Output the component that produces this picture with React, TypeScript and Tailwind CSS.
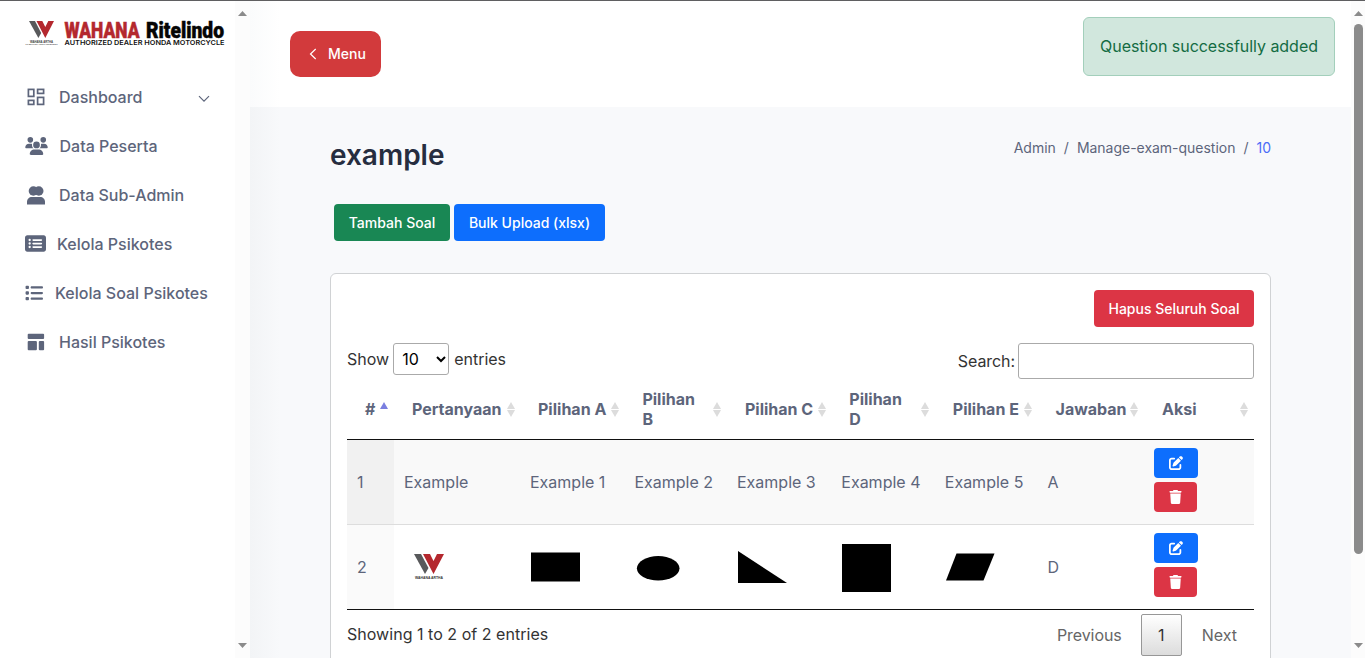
import React from "react";
import { FaUsers, FaRectangleList, FaList, FaPenToSquare, FaTrash } from "react-icons/fa6";

function WahanaMark({ className }: { className: string }) {
  return (
    <svg viewBox="0 0 30 20" className={className} preserveAspectRatio="none">
      <path d="M0 0H7L14.5 14L11 20Z" fill="#58595b" />
      <path d="M9 0H16L19.5 7L23 0H30L19.5 20Z" fill="#b4282e" />
    </svg>
  );
}

function GridIcon() {
  return (
    <svg viewBox="0 0 18 18" className="h-[18px] w-[18px]" fill="none" stroke="currentColor" strokeWidth="1.7">
      <rect x="1.4" y="1.4" width="5.4" height="7" />
      <rect x="10.6" y="1.4" width="6" height="4" />
      <rect x="1.4" y="12.4" width="5.4" height="4" />
      <rect x="10.6" y="9.4" width="6" height="7" />
    </svg>
  );
}

function PeopleIcon() {
  return (
    <svg viewBox="0 0 18 19" className="mt-px h-[19px] w-[18px]" fill="currentColor">
      <circle cx="6.4" cy="5" r="4.7" />
      <circle cx="11.8" cy="5" r="4.7" />
      <path d="M0 18.5V16C0 13 2 11 5 11H13C16 11 18 13 18 16V18.5Z" />
    </svg>
  );
}

function LayoutIcon() {
  return (
    <svg viewBox="0 0 18 18" className="h-[18px] w-[18px]" fill="currentColor">
      <rect x="0.7" y="0.8" width="16.4" height="5.3" rx="1" />
      <rect x="0.7" y="8" width="9.2" height="9.2" rx="1" />
      <rect x="11.8" y="8" width="5.3" height="9.2" rx="1" />
    </svg>
  );
}

const menu = [
  { label: "Dashboard", icon: <GridIcon />, pad: "pl-[27px] gap-[14px]" },
  { label: "Data Peserta", icon: <FaUsers className="h-[18px] w-[23px]" />, pad: "pl-[25px] gap-[11.5px]" },
  { label: "Data Sub-Admin", icon: <PeopleIcon />, pad: "pl-[27px] gap-[14px]" },
  { label: "Kelola Psikotes", icon: <FaRectangleList className="h-[21px] w-[21px]" />, pad: "pl-[25px] gap-[11px]" },
  { label: "Kelola Soal Psikotes", icon: <FaList className="h-[18px] w-[18px]" />, pad: "pl-[25px] gap-[12px]" },
  { label: "Hasil Psikotes", icon: <LayoutIcon />, pad: "pl-[27px] gap-[14px]" },
];

function Triangle({ down, className }: { down?: boolean; className: string }) {
  return (
    <svg viewBox="0 0 8 6" className={className} fill="currentColor" preserveAspectRatio="none">
      <path d={down ? "M0 0H8L4 6Z" : "M0 6H8L4 0Z"} />
    </svg>
  );
}

function Sidebar() {
  return (
    <aside className="flex w-[250px] shrink-0">
      <div className="flex w-[235px] flex-col bg-white">
        <div className="flex h-[71px] items-start pl-[25px] pt-[20px]">
          <svg viewBox="0 0 33 26" className="h-[26px] w-[33px]" fontFamily="Liberation Sans" fontWeight="700" fill="#444">
            <path d="M4 0H10L16.2 12L13.4 17Z" fill="#58595b" />
            <path d="M11.5 0H17.3L20.3 6L23.3 0H29L20.3 17Z" fill="#b4282e" />
            <text x="5" y="21.6" fontSize="2.8" textLength="23" lengthAdjust="spacingAndGlyphs">WAHANA ARTHA</text>
            <text x="0.5" y="24.2" fontSize="2" textLength="32" lengthAdjust="spacingAndGlyphs">PT WAHANA ARTHA RITELINDO</text>
          </svg>
          <div className="ml-[6px] flex w-[162px] flex-col">
            <svg viewBox="0 0 162 18" className="h-[18px] w-[162px] overflow-visible" fontFamily="Roboto" fontWeight="900" fontSize="22" strokeWidth="0.5">
              <text x="0.5" y="16.7" textLength="75" lengthAdjust="spacingAndGlyphs" fill="#b4282e" stroke="#b4282e">WAHANA</text>
              <text x="82" y="16.7" textLength="78" lengthAdjust="spacingAndGlyphs" fill="#050505" stroke="#050505">Ritelindo</text>
            </svg>
            <svg viewBox="0 0 162 8" className="h-[8px] w-[162px] overflow-visible" fontFamily="Inter" fontWeight="600" fontSize="6.8">
              <text x="0.5" y="6" textLength="160" lengthAdjust="spacingAndGlyphs" fill="#111">AUTHORIZED DEALER HONDA MOTORCYCLE</text>
            </svg>
          </div>
        </div>
        <nav className="flex flex-col">
          {menu.map((m, i) => (
            <div key={m.label} className={`flex h-[49px] items-center text-[#5d657b] ${m.pad}`}>
              {m.icon}
              <span className="whitespace-nowrap text-base font-medium">{m.label}</span>
              {i === 0 && (
                <svg viewBox="0 0 12 8" className="ml-auto mr-[25px] mt-[5px] h-[8px] w-[12px]" fill="none" stroke="currentColor" strokeWidth="1.2">
                  <path d="M1 1.2L6 6.2L11 1.2" />
                </svg>
              )}
            </div>
          ))}
        </nav>
      </div>
      <div className="flex w-[15px] flex-col items-center justify-between bg-[#fcfcfc] pb-[10px] pt-[10px] text-[#8b8b8b]">
        <Triangle className="h-[5px] w-[9px]" />
        <Triangle down className="h-[5px] w-[9px]" />
      </div>
    </aside>
  );
}

const headers = ["Pertanyaan", "Pilihan A", "Pilihan B", "Pilihan C", "Pilihan D", "Pilihan E", "Jawaban", "Aksi"];
const columns = "grid grid-cols-[47px_126px_104.4px_102.6px_104.3px_103.5px_102.8px_106.4px_110px]";

function ActionButtons() {
  return (
    <div className="flex flex-col gap-1 pb-[4px] pl-[10px]">
      <button className="flex h-[30px] w-[44px] items-center justify-center rounded-[4px] bg-[#0d6efd] text-white">
        <FaPenToSquare className="h-[14px] w-[14px]" />
      </button>
      <button className="flex h-[30px] w-[43px] items-center justify-center rounded-[4px] bg-[#dc3545] text-white">
        <FaTrash className="h-[14px] w-[13px]" />
      </button>
    </div>
  );
}

const shapes = [
  <svg viewBox="0 0 50 50" className="h-[50px] w-[50px]"><rect x="1" y="10.5" width="49" height="29" /></svg>,
  <svg viewBox="0 0 50 50" className="h-[50px] w-[50px]"><ellipse cx="24.2" cy="26.3" rx="21.3" ry="12.2" /></svg>,
  <svg viewBox="0 0 50 50" className="h-[50px] w-[50px]"><path d="M1 9V41H50Z" /></svg>,
  <svg viewBox="0 0 50 50" className="h-[50px] w-[50px]"><rect x="1" y="2" width="49" height="48" /></svg>,
  <svg viewBox="0 0 50 50" className="h-[50px] w-[50px]"><path d="M11.5 11.5H49.5L38.5 38.5H1Z" /></svg>,
];

function QuestionTable() {
  return (
    <div className="text-[#5d657b]">
      <div className={`${columns} h-[61px] border-b border-[#111] font-bold leading-5`}>
        <div className="flex items-center gap-[5px] pl-[18px]">
          #<Triangle className="mb-[7px] h-[7px] w-[8px] text-[#7a7fe0]" />
        </div>
        {headers.map((h) => (
          <div key={h} className="flex items-center justify-between pl-[18px] pr-[5.5px]">
            <span className={h === "Pilihan B" || h === "Pilihan D" ? "w-[60px]" : "whitespace-nowrap"}>{h}</span>
            <span className="flex flex-col gap-[1px] text-[#dcdcdc]">
              <Triangle className="h-[7px] w-[8px]" />
              <Triangle down className="h-[7px] w-[8px]" />
            </span>
          </div>
        ))}
      </div>
      <div className={`${columns} h-[84px] items-center bg-[#f9f9f9]`}>
        <div className="flex h-full items-center bg-[#f1f1f1] pl-[10px]">1</div>
        {["Example", "Example 1", "Example 2", "Example 3", "Example 4", "Example 5", "A"].map((t) => (
          <div key={t} className="whitespace-nowrap pl-[10px]">{t}</div>
        ))}
        <ActionButtons />
      </div>
      <div className={`${columns} h-[86px] items-center border-b border-t border-b-[#111] border-t-[#ddd] bg-white`}>
        <div className="flex h-full items-center bg-[#fafafa] pl-[10px]">2</div>
        <div className="flex w-[70px] flex-col items-center">
          <WahanaMark className="h-[20px] w-[30px]" />
          <span className="mt-[2px] whitespace-nowrap font-['Liberation_Sans'] text-[3.4px] font-bold leading-[4px] text-[#333]">WAHANA ARTHA</span>
        </div>
        {shapes.map((s, i) => (
          <div key={i} className="pl-[10px] text-black">{s}</div>
        ))}
        <div className="pl-[10px]">D</div>
        <ActionButtons />
      </div>
    </div>
  );
}

export default function App() {
  return (
    <div className="relative flex h-[658px] w-[1365px] overflow-hidden border-t border-[#5f5f61] bg-white font-['Inter',sans-serif] text-base text-[#333]">
      <Sidebar />
      <main className="flex min-w-0 flex-1 flex-col bg-[linear-gradient(90deg,#f2f4f6,#f8f9fb_30px)]">
        <header className="h-[106px] shrink-0 bg-[linear-gradient(90deg,#fafbfc,#fff_30px)] pl-[40px] pt-[30px]">
          <button className="flex h-[46px] w-[91px] items-center rounded-[10px] bg-[#d23a3c] pl-[19px] text-sm font-medium text-white">
            <svg viewBox="0 0 8 12" className="mr-[11px] h-[12px] w-[8px]" fill="none" stroke="currentColor" strokeWidth="1.2">
              <path d="M6.7 1L1.5 6L6.7 11" />
            </svg>
            Menu
          </button>
        </header>
        <div className="flex flex-1 flex-col pl-[80px] pr-[80px]">
          <div className="flex justify-between pt-[28px]">
            <h1 className="pt-[3px] text-[28px] font-semibold leading-[34px] text-[#262d3f]">example</h1>
            <div className="flex gap-[8px] pt-[3px] text-sm leading-5 text-[#5d657b]">
              <span>Admin</span><span>/</span><span className="tracking-[-0.02px]">Manage-exam-question</span><span>/</span>
              <span className="text-[#4a6cf7]">10</span>
            </div>
          </div>
          <div className="mt-[32px] flex gap-1 pl-1 text-sm font-medium text-white">
            <button className="h-[37px] w-[116px] rounded-[4px] bg-[#198754]">Tambah Soal</button>
            <button className="h-[37px] w-[151px] rounded-[4px] bg-[#0d6efd]">Bulk Upload (xlsx)</button>
          </div>
          <section className="mt-[32px] h-[420px] w-[941px] rounded-t-[6px] border border-[#d0d2d4] bg-white p-4">
            <div className="flex justify-end">
              <button className="h-[37px] w-[160px] rounded-[4px] bg-[#dc3545] text-sm font-medium text-white">Hapus Seluruh Soal</button>
            </div>
            <div className="mt-[16px] flex h-[36px] items-start justify-between">
              <div className="flex h-8 items-center">
                Show
                <div className="ml-[4px] mr-[5px] flex h-8 w-[56px] items-center justify-between rounded-[3px] border border-[#aaa] pl-[8px] pr-[2px] text-black">
                  10
                  <svg viewBox="0 0 10 7" className="h-[7px] w-[10px]" fill="none" stroke="currentColor" strokeWidth="2"><path d="M1 1L5 5L9 1" /></svg>
                </div>
                entries
              </div>
              <label className="flex items-center gap-[3px]">
                <span className="tracking-[-0.08px]">Search:</span>
                <input className="h-[36px] w-[236px] rounded-[3px] border border-[#aaa] bg-transparent" />
              </label>
            </div>
            <QuestionTable />
            <div className="flex justify-between">
              <div className="pt-[12px] leading-6 tracking-[0.03px]">Showing 1 to 2 of 2 entries</div>
              <div className="flex items-center pr-[17px] pt-[4px] text-[#666]">
                <span className="tracking-[-0.08px]">Previous</span>
                <div className="ml-[19px] mr-[20px] flex h-[42px] w-[41px] items-center justify-center rounded-[2px] border border-[#979797] bg-linear-to-b from-white to-[#dcdcdc] text-[#333]">1</div>
                Next
              </div>
            </div>
          </section>
        </div>
      </main>
      <div className="flex w-[14px] shrink-0 flex-col items-center bg-[#fcfcfc] pt-[10px] text-[#8b8b8b]">
        <Triangle className="h-[5px] w-[9px]" />
        <div className="mt-[8px] h-[530px] w-[9px] rounded-full bg-[#8b8b8b]" />
        <Triangle down className="mb-[10px] mt-auto h-[5px] w-[9px]" />
      </div>
      <div className="absolute right-[30px] top-[16px] flex h-[59px] w-[252px] items-center justify-center rounded-[6px] border border-[#a3cfbb] bg-[#d1e7dd] pb-[2px] tracking-[-0.04px] text-[#146c43]">
        Question successfully added
      </div>
    </div>
  );
}
